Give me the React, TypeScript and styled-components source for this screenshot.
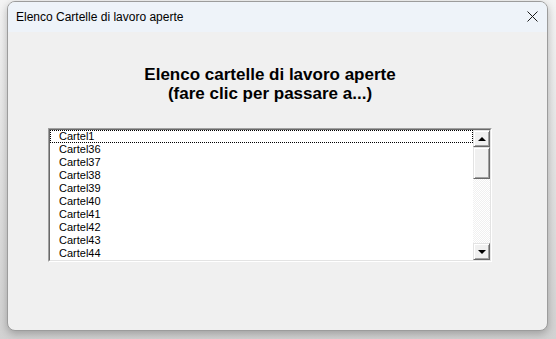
import React from "react";
import styled, { createGlobalStyle } from "styled-components";

const sheets = [
  "Cartel1",
  "Cartel36",
  "Cartel37",
  "Cartel38",
  "Cartel39",
  "Cartel40",
  "Cartel41",
  "Cartel42",
  "Cartel43",
  "Cartel44",
];

const App = () => {
  return (
    <Desktop>
      <GlobalStyle />
      <Window>
        <TitleBar>
          <Title>Elenco Cartelle di lavoro aperte</Title>
          <CloseButton>
            <svg width="11" height="11" viewBox="0 0 11 11">
              <path d="M0.5 0.5 L10.5 10.5 M10.5 0.5 L0.5 10.5" stroke="#1a1a1a" strokeWidth="1" />
            </svg>
          </CloseButton>
        </TitleBar>
        <Body>
          <Content>
            <Heading>
              Elenco cartelle di lavoro aperte
              <br />
              (fare clic per passare a...)
            </Heading>
            <ListBox>
              <ListFrame>
                <Items>
                  {sheets.map((name, i) => (
                    <Item key={name} focused={i === 0}>
                      {name}
                    </Item>
                  ))}
                </Items>
                <ScrollBar>
                  <ScrollButton>
                    <Arrow dir="up" />
                  </ScrollButton>
                  <Thumb />
                  <Track />
                  <ScrollButton>
                    <Arrow dir="down" />
                  </ScrollButton>
                </ScrollBar>
              </ListFrame>
            </ListBox>
          </Content>
        </Body>
      </Window>
    </Desktop>
  );
};

export default App;

const GlobalStyle = createGlobalStyle`
  html, body {
    margin: 0;
    background: #ffffff;
  }
  * {
    box-sizing: border-box;
  }
`;

const Desktop = styled.div`
  width: 556px;
  height: 339px;
  padding: 1px 8px 8px 7px;
  display: flex;
  background: linear-gradient(to bottom, #f4f4f4, #d2d2d2);
`;

const Window = styled.div`
  flex: 1;
  display: flex;
  flex-direction: column;
  border: 1px solid #9c9c9c;
  border-radius: 8px;
  overflow: hidden;
  background: #f0f0f0;
  box-shadow: 0 3px 8px rgba(0, 0, 0, 0.25);
`;

const TitleBar = styled.div`
  height: 30px;
  flex-shrink: 0;
  display: flex;
  align-items: center;
  justify-content: space-between;
  padding: 0 9px 0 8px;
  background: #eef3f9;
`;

const Title = styled.span`
  font-family: "Liberation Sans", Arial, sans-serif;
  font-size: 12px;
  color: #000;
`;

const CloseButton = styled.div`
  width: 11px;
  height: 11px;
  display: flex;
  margin-top: -1px;
`;

const Body = styled.div`
  flex: 1;
  padding: 33px 0 0 40px;
`;

const Content = styled.div`
  width: 444px;
  display: flex;
  flex-direction: column;
`;

const Heading = styled.div`
  font-family: "Liberation Sans", Arial, sans-serif;
  font-weight: bold;
  font-size: 17px;
  line-height: 19px;
  text-align: center;
  color: #000;
`;

const ListBox = styled.div`
  margin-top: 25px;
  height: 134px;
  border: 1px solid;
  border-color: #a0a0a0 #ffffff #ffffff #a0a0a0;
`;

const ListFrame = styled.div`
  height: 100%;
  display: flex;
  border: 1px solid;
  border-color: #696969 #e3e3e3 #e3e3e3 #696969;
  background: #ffffff;
`;

const Items = styled.div`
  flex: 1;
  display: flex;
  flex-direction: column;
`;

const Item = styled.div<{ focused?: boolean }>`
  height: 13px;
  padding-left: 9px;
  font-family: "Liberation Sans", Arial, sans-serif;
  font-size: 11px;
  line-height: 13px;
  color: #000;
  outline: ${(p) => (p.focused ? "1px dotted #000" : "none")};
  outline-offset: -1px;
`;

const ScrollBar = styled.div`
  width: 17px;
  display: flex;
  flex-direction: column;
`;

const raised = `
  background: #f0f0f0;
  border: 1px solid;
  border-color: #e3e3e3 #696969 #696969 #e3e3e3;
  box-shadow: inset 1px 1px #ffffff, inset -1px -1px #a0a0a0;
`;

const ScrollButton = styled.div`
  height: 17px;
  display: flex;
  align-items: center;
  justify-content: center;
  ${raised}
`;

const Arrow = styled.div<{ dir: "up" | "down" }>`
  width: 0;
  height: 0;
  border-left: 4px solid transparent;
  border-right: 4px solid transparent;
  ${(p) => (p.dir === "up" ? "border-bottom: 4px solid #000;" : "border-top: 4px solid #000;")}
`;

const Thumb = styled.div`
  height: 32px;
  ${raised}
`;

const Track = styled.div`
  flex: 1;
  background: repeating-conic-gradient(#f0f0f0 0 25%, #ffffff 0 50%) 0 0 / 2px 2px;
`;
